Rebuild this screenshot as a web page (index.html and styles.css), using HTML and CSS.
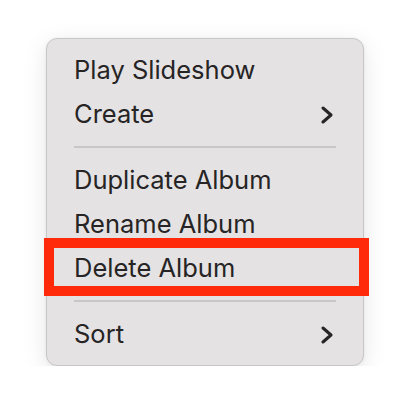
FILE: index.html
```html
<!DOCTYPE html>
<html>
<head>
<meta charset="utf-8">
<link rel="stylesheet" href="styles.css">
</head>
<body>
<div class="menu">
  <div class="item">Play Slideshow</div>
  <div class="item">Create
    <svg class="chev" width="12" height="18" viewBox="0 0 12 18"><polyline points="2,2 10,9 2,16" fill="none" stroke="#262424" stroke-width="3" stroke-linecap="round" stroke-linejoin="round"/></svg>
  </div>
  <div class="sep"></div>
  <div class="item">Duplicate Album</div>
  <div class="item">Rename Album</div>
  <div class="item highlighted">Delete Album<span class="mark"></span></div>
  <div class="sep"></div>
  <div class="item">Sort
    <svg class="chev" width="12" height="18" viewBox="0 0 12 18"><polyline points="2,2 10,9 2,16" fill="none" stroke="#262424" stroke-width="3" stroke-linecap="round" stroke-linejoin="round"/></svg>
  </div>
</div>
</body>
</html>
```
FILE: styles.css
```css
html, body {
  margin: 0;
  padding: 0;
  background: #ffffff;
}
body {
  padding: 38px 0 0 46px;
  font-family: Inter, "Liberation Sans", Arial, sans-serif;
}
.menu {
  width: 316px;
  padding: 9px 0;
  background: #e5e2e3;
  border: 1px solid #c9c6c8;
  border-radius: 11px;
  box-shadow: 0 6px 24px rgba(0, 0, 0, 0.10), 0 1px 4px rgba(0, 0, 0, 0.06);
}
.item {
  position: relative;
  height: 44px;
  line-height: 44px;
  padding: 0 30px 0 27px;
  font-size: 25.5px;
  color: #262424;
  display: flex;
  align-items: center;
  justify-content: space-between;
}
.chev {
  display: block;
  margin-top: 1px;
}
.sep {
  height: 22px;
  display: flex;
  align-items: center;
  padding: 0 27px;
}
.sep::before {
  content: "";
  display: block;
  width: 100%;
  height: 2px;
  background: #c9c6c8;
}
.mark {
  position: absolute;
  left: -3px;
  right: -6px;
  top: -8px;
  bottom: -6px;
  border: 10px solid #ff2a0a;
}
```
